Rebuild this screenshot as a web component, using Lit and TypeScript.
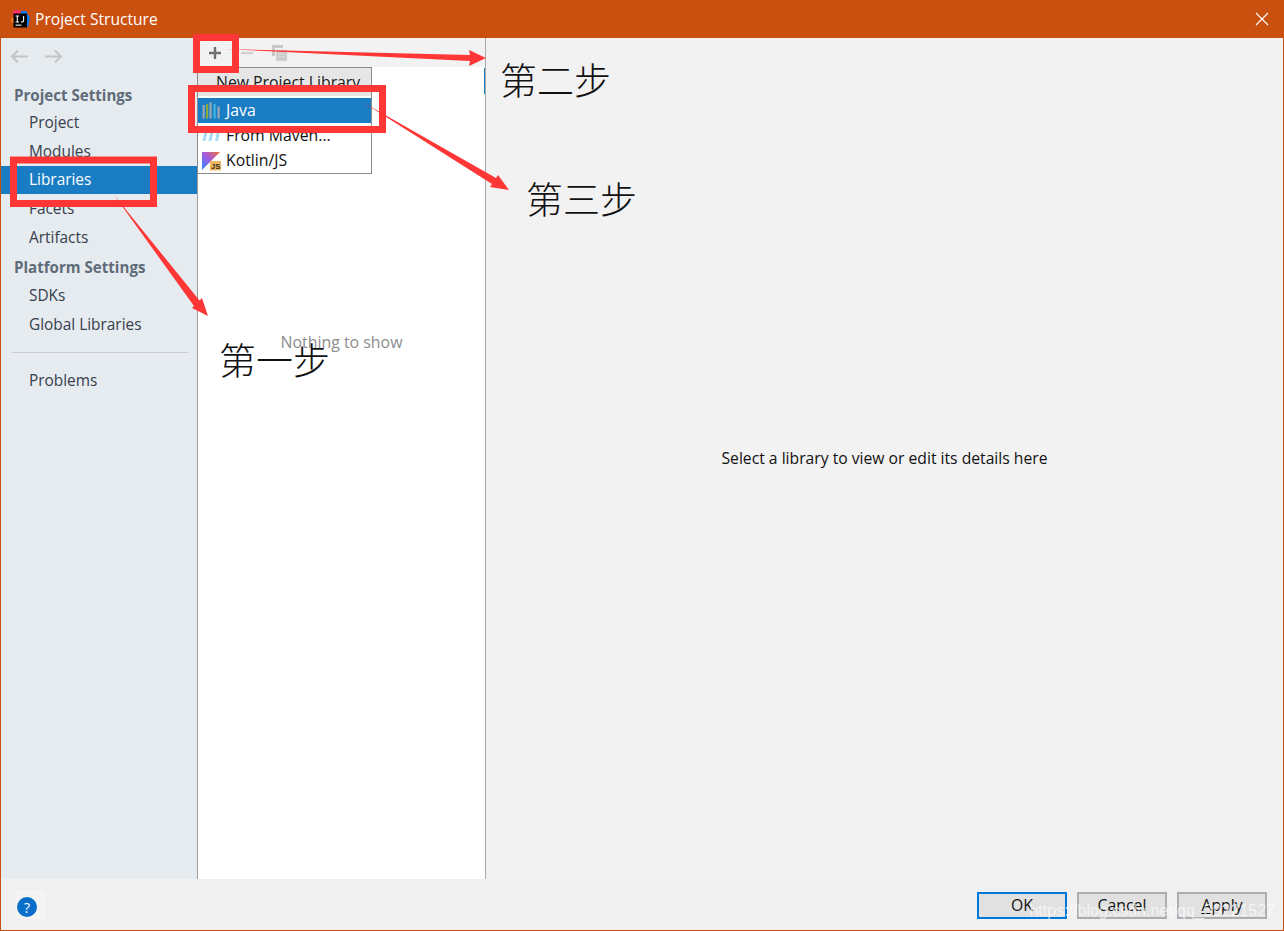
import { LitElement, html, css, svg } from "lit";
import { customElement } from "lit/decorators.js";

@customElement("app-root")
export class AppRoot extends LitElement {
  static styles = css`
    :host { display: block; position: relative; width: 1284px; height: 931px; overflow: hidden;
      font-family: "Open Sans", "Noto Sans", sans-serif; font-size: 15.6px; color: #1a1a1a; }
    .window { height: 931px; box-sizing: border-box; border: 1px solid #ca5010; border-top: 0;
      display: flex; flex-direction: column; background: #f2f2f2; }
    .titlebar { height: 38px; flex: none; margin: 0 -1px; background: #ca5010; color: #fff; display: flex; align-items: center;
      padding-left: 11px; gap: 5px; font-size: 15.6px; }
    .titlebar .spacer { flex: 1; }
    .close { width: 14px; height: 14px; margin-right: 15px; }
    .main { flex: 1; display: flex; min-height: 0; }
    .side { width: 196px; flex: none; background: #e6ebf0; display: flex; flex-direction: column; }
    .nav { height: 44px; flex: none; display: flex; align-items: flex-start; gap: 15px; padding: 11px 0 0 9px; box-sizing: border-box; }
    .nav svg { width: 19px; height: 15px; }
    .head, .item { display: flex; align-items: center; flex: none; }
    .head { height: 26px; padding-left: 13px; font-weight: 700; font-size: 15.1px; color: #5f6b78; }
    .head.second { height: 29px; padding-top: 1px; box-sizing: border-box; }
    .item { height: 28.8px; padding-left: 28px; color: #36404c; font-size: 15.4px; }
    .item.sel { background: #1a7dc4; color: #fff; }
    .sep { height: 1px; background: #c9ccd0; margin: 13px 9px 14px 11px; flex: none; }
    .list { width: 287px; flex: none; border-left: 1px solid #9c9c9c; border-right: 1px solid #a9a9a9; background: #fff;
      display: flex; flex-direction: column; }
    .tools { height: 29px; flex: none; background: #f2f2f2; display: flex; align-items: center; padding-left: 8px; gap: 14px; }
    .tools svg { width: 18px; height: 18px; }
    .empty { flex: 1; display: flex; justify-content: center; padding-top: 264px; color: #8c8c8c; font-size: 15.9px; }
    .detail { flex: 1; display: flex; align-items: center; justify-content: center; color: #111; background: #f2f2f2; font-size: 15.7px; padding-bottom: 2px; }
    .footer { height: 51px; box-sizing: border-box; flex: none; background: #f0f0f0; display: flex; align-items: center; justify-content: flex-end;
      padding: 2px 16px 0 0; gap: 10px; position: relative; }
    .help { position: absolute; left: 15px; top: 11px; width: 29px; height: 29px; box-sizing: border-box; padding: 7px 0 0 1px; background: #f4f4f4; }
    .help span { width: 20px; height: 20px; border-radius: 50%; background: #0a6fc9; color: #fff; display: flex; align-items: center; justify-content: center; font-size: 14px; }
    .btn { width: 90px; height: 27px; box-sizing: border-box; border: 2px solid #adadad; background: #e1e1e1; display: flex; align-items: center; justify-content: center; color: #111; font-size: 15.8px; padding-bottom: 1px; }
    .btn.def { border-color: #0078d7; }
    .btn u { text-underline-offset: 2px; }
    .menu { position: absolute; left: 197px; top: 67px; width: 175px; height: 107px; box-sizing: border-box; border: 1px solid #8a8a8a; background: #fff; font-size: 15.8px; }
    .m-head { height: 28px; background: #e6e6e6; display: flex; align-items: center; padding-left: 18px; box-sizing: border-box; margin-bottom: 2px; }
    .m-row { height: 25px; display: flex; align-items: center; gap: 5px; padding-left: 3px; color: #111; }
    .m-row span { padding-bottom: 2px; }
    .m-row.sel { background: #1a7dc4; color: #fff; }
    .m-row svg { width: 20px; height: 20px; flex: none; }
    .marks { position: absolute; inset: 0; width: 1284px; height: 931px; pointer-events: none; }
    .step { position: absolute; font-family: "Noto Sans CJK SC", sans-serif; font-weight: 300; font-size: 37px; line-height: 40px; color: #111; white-space: nowrap; }
    .s1 { left: 219px; top: 339px; }
    .s2 { left: 500px; top: 59px; }
    .s3 { left: 526px; top: 178px; }
    .mark { position: absolute; right: 9px; top: 902px; font-family: "Liberation Sans", sans-serif; font-size: 16px; color: rgba(255,255,255,0.65); white-space: nowrap; }
    .focus { position: absolute; left: 484px; top: 68px; width: 1px; height: 26px; background: #1a7dc4; }
  `;

  private logo() {
    return html`<svg width="19" height="19" viewBox="0 0 19 19">
      <path d="M1.5 1 L9 0 L9 8 L3 10 Z" fill="#fe2f6a" />
      <path d="M10 1 L15 1 L19 8 L17 17 L10 16 Z" fill="#087cfa" />
      <path d="M0 9 L3 7 L4 13 L1 13 Z" fill="#fc801d" />
      <rect x="2.5" y="3.5" width="13.5" height="14" fill="#000" />
      <rect x="4.5" y="14.6" width="6" height="1.1" fill="#fff" />
      <path d="M4.6 6 H8 M6.3 6 V12 M4.6 12 H8 M12.6 6 V10.8 Q12.6 12 10 12" stroke="#fff" stroke-width="1.1" fill="none" />
    </svg>`;
  }

  render() {
    return html`
      <div class="window">
        <div class="titlebar">
          ${this.logo()}
          <span>Project Structure</span>
          <span class="spacer"></span>
          <svg class="close" viewBox="0 0 14 14"><path d="M1 1 L13 13 M13 1 L1 13" stroke="#fff" stroke-width="1.1" /></svg>
        </div>
        <div class="main">
          <div class="side">
            <div class="nav">
              <svg viewBox="0 0 19 15"><path d="M18 7.5 H2 M8 1.5 L2 7.5 L8 13.5" fill="none" stroke="#c4c4c4" stroke-width="2" /></svg>
              <svg viewBox="0 0 19 15"><path d="M1 7.5 H17 M11 1.5 L17 7.5 L11 13.5" fill="none" stroke="#c4c4c4" stroke-width="2" /></svg>
            </div>
            <div class="head">Project Settings</div>
            <div class="item">Project</div>
            <div class="item">Modules</div>
            <div class="item sel">Libraries</div>
            <div class="item">Facets</div>
            <div class="item">Artifacts</div>
            <div class="head second">Platform Settings</div>
            <div class="item">SDKs</div>
            <div class="item">Global Libraries</div>
            <div class="sep"></div>
            <div class="item">Problems</div>
          </div>
          <div class="list">
            <div class="tools">
              <svg viewBox="0 0 18 18"><path d="M9 3 V15 M3 9 H15" stroke="#6e6e6e" stroke-width="2.4" /></svg>
              <svg viewBox="0 0 18 18"><path d="M3 9 H15" stroke="#cfcfcf" stroke-width="2.4" /></svg>
              <svg viewBox="0 0 18 18"><path d="M2 1 H13 V4 H5 V12 H2 Z" fill="#c8c8c8" /><path d="M6 6 H17 V17 H6 Z M8 10 H15 M8 13 H15" fill="#c8c8c8" stroke="#e4e4e4" stroke-width="1" /></svg>
            </div>
            <div class="empty">Nothing to show</div>
          </div>
          <div class="detail">Select a library to view or edit its details here</div>
        </div>
        <div class="footer">
          <div class="help"><span>?</span></div>
          <div class="btn def">OK</div>
          <div class="btn">Cancel</div>
          <div class="btn"><span><u>A</u>pply</span></div>
        </div>
      </div>

      <div class="focus"></div>

      <div class="menu">
        <div class="m-head">New Project Library</div>
        <div class="m-row sel">
          <svg viewBox="0 0 20 20">
            <rect x="1.5" y="4" width="2.2" height="13.5" fill="#9aa7b0" />
            <rect x="5" y="3" width="2.2" height="14.5" fill="#8aa83c" />
            <rect x="8.5" y="1.5" width="2.2" height="16" fill="#9aa7b0" />
            <rect x="12.5" y="3" width="2.2" height="14.5" fill="#40b6e0" />
            <rect x="16.5" y="5.5" width="2.2" height="12" fill="#9aa7b0" />
          </svg>
          <span>Java</span>
        </div>
        <div class="m-row">
          <svg viewBox="0 0 20 20"><path d="M4 3 L1.5 15 H4.5 L7 3 Z M10 3 L7.5 15 H10.5 L13 3 Z M16.5 3 L14 15 H17 L19.5 3 Z" fill="#a5dcf2" /></svg>
          <span>From Maven...</span>
        </div>
        <div class="m-row">
          <svg viewBox="0 0 20 20">
            <defs><linearGradient id="k" x1="0" y1="1" x2="1" y2="0"><stop offset="0" stop-color="#2b8cff" /><stop offset="0.5" stop-color="#a35be0" /><stop offset="1" stop-color="#f0703a" /></linearGradient></defs>
            <path d="M1 1 H19 L10 10 L1 19 Z" fill="url(#k)" />
            <rect x="9" y="10" width="11" height="9.5" fill="#f0b860" />
            <text x="10" y="18" font-size="7.5" font-weight="700" font-family="Liberation Sans, sans-serif" fill="#2a2a2a">JS</text>
          </svg>
          <span>Kotlin/JS</span>
        </div>
      </div>

      <div class="step s1">第一步</div>
      <div class="step s2">第二步</div>
      <div class="step s3">第三步</div>

      <svg class="marks" viewBox="0 0 1284 931">
        ${svg`
          <g fill="none" stroke="#ff3636" stroke-width="7">
            <rect x="196.5" y="37.5" width="39" height="32" />
            <rect x="191.5" y="88.5" width="191" height="41" />
            <rect x="13.5" y="160" width="140" height="43.5" />
          </g>
          <g fill="#ff3636">
            <polygon points="225,49 470,55 469,50 486,58 469,66 470,61" />
            <polygon points="364,103 496,178 498,175 509,190 490,187 492,184" />
            <polygon points="114,195 199.5,300.5 202,298 208,316 192,308 194,306" />
          </g>
        `}
      </svg>
      <div class="mark">https://blog.csdn.net/qq_39221527</div>
    `;
  }
}
